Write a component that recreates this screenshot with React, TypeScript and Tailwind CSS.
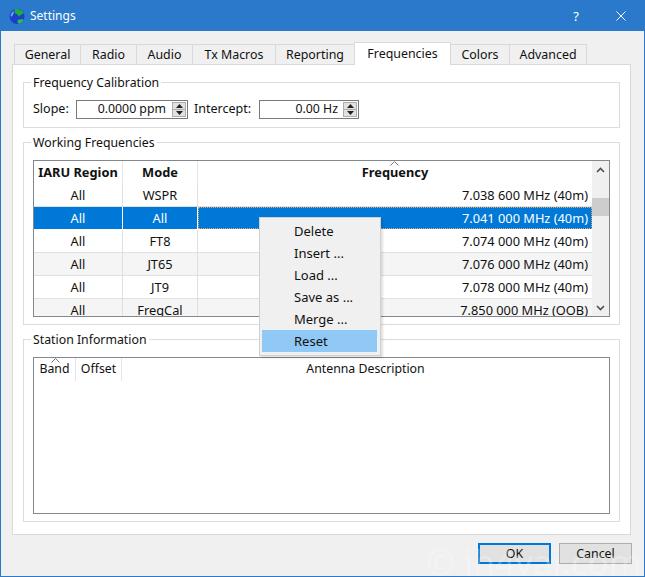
const FONT = "font-['Noto_Sans','Liberation_Sans',sans-serif]";

function Globe() {
  return (
    <svg width="16" height="17" viewBox="0 0 16 17" className="shrink-0">
      <circle cx="8" cy="8.5" r="7.5" fill="#1c3fc8" />
      <path d="M6 1.2 C9 .6 13 2 14.5 5 C13.5 7 11 6.2 10.5 8.5 C9 8 8 5.5 6.5 5.5 C5.5 4 5.2 2.5 6 1.2Z" fill="#1fae3c" />
      <path d="M9 12 C11 11 13 11 14.6 11.5 C13.5 14 11.5 15.5 9.5 15.8 C8.5 14.5 8.2 13 9 12Z" fill="#27c24a" />
      <path d="M1.5 7 C2.5 4.5 4 3.5 5 3 C5.2 5 4 7 2.5 9 Z" fill="#6ba4f0" />
    </svg>
  );
}

const tabs: [string, string][] = [
  ["General", "w-[67px]"],
  ["Radio", "w-[57px]"],
  ["Audio", "w-[57px]"],
  ["Tx Macros", "w-[84px]"],
  ["Reporting", "w-[80px]"],
];

function Tab({ label, w }: { label: string; w: string }) {
  return (
    <div className={`${w} h-[20px] pt-[2px] bg-[#f0f0f0] border border-b-0 border-[#d9d9d9] -mr-px flex items-center justify-center text-[12.4px] leading-none`}>
      {label}
    </div>
  );
}

function Spin({ w, text, gap }: { w: string; text: string; gap: string }) {
  return (
    <div className={`${w} h-[19px] border border-[#7a7a7a] bg-white flex items-center justify-end pr-[1px]`}>
      <span className={`${gap} text-[12.3px] leading-none`}>{text}</span>
      <div className="w-[14px] h-[15px] border border-[#adadad] bg-[#e1e1e1] flex flex-col">
        <div className="flex-1 flex items-center justify-center border-b border-[#adadad]">
          <svg width="7" height="4" viewBox="0 0 7 4"><path d="M3.5 0L7 4H0Z" fill="#222" /></svg>
        </div>
        <div className="flex-1 flex items-center justify-center">
          <svg width="7" height="4" viewBox="0 0 7 4"><path d="M0 0H7L3.5 4Z" fill="#222" /></svg>
        </div>
      </div>
    </div>
  );
}

function Group({ title, h, mb, children }: { title: string; h: string; mb: string; children: React.ReactNode }) {
  return (
    <div className={`relative ${h} ${mb} border border-[#dcdcdc]`}>
      <span className="absolute left-[7px] -top-[9px] h-[18px] bg-white px-[2px] text-[12.3px] leading-[18px]">{title}</span>
      {children}
    </div>
  );
}

const rows = [
  ["All", "WSPR", "7.038 600 MHz (40m)"],
  ["All", "All", "7.041 000 MHz (40m)"],
  ["All", "FT8", "7.074 000 MHz (40m)"],
  ["All", "JT65", "7.076 000 MHz (40m)"],
  ["All", "JT9", "7.078 000 MHz (40m)"],
  ["All", "FreqCal", "7.850 000 MHz (OOB)"],
];

function SortCaret({ className }: { className: string }) {
  return (
    <svg width="9" height="5" viewBox="0 0 9 5" className={`absolute ${className}`}>
      <path d="M.5 4.5L4.5.5L8.5 4.5" fill="none" stroke="#777" strokeWidth="1" />
    </svg>
  );
}

function FreqTable() {
  return (
    <div className="mx-[9px] mt-[17px] h-[157px] border border-[#828790] bg-white flex overflow-hidden">
      <div className="w-[558px] shrink-0">
        <div className="flex h-[23px] font-bold text-[12.8px] leading-none">
          <div className="w-[89px] border-r border-[#e5e5e5] flex items-center justify-center">IARU Region</div>
          <div className="w-[75px] border-r border-[#e5e5e5] flex items-center justify-center">Mode</div>
          <div className="relative flex-1 flex items-center justify-center">
            <SortCaret className="left-[192px] top-0" />
            Frequency
          </div>
        </div>
        {rows.map((r, i) => {
          const sel = i === 1;
          const alt = i % 2 === 1 && !sel;
          return (
            <div
              key={i}
              className={`flex h-[23px] text-[12.8px] leading-none border-b ${sel ? "bg-[#0078d7] text-white border-white" : alt ? "bg-[#f5f5f5] border-[#e0e0e0]" : "bg-white border-[#e0e0e0]"}`}
            >
              <div className={`w-[89px] border-r flex items-center justify-center ${sel ? "border-white" : "border-[#e0e0e0]"}`}>{r[0]}</div>
              <div className={`w-[75px] border-r flex items-center justify-center ${sel ? "border-white" : "border-[#e0e0e0]"}`}>{r[1]}</div>
              <div className={`flex-1 flex items-center justify-end ${sel ? "pr-[3px] border border-dotted border-[#e8a860]" : "pr-[4px]"}`}>{r[2]}</div>
            </div>
          );
        })}
      </div>
      <div className="w-[18px] bg-[#f0f0f0] flex flex-col items-center relative">
        <div className="h-[17px] w-full flex items-center justify-center">
          <svg width="9" height="6" viewBox="0 0 9 6"><path d="M1 5L4.5 1.5L8 5" fill="none" stroke="#505050" strokeWidth="1.6" /></svg>
        </div>
        <div className="mt-[20px] h-[18px] w-[17px] bg-[#cdcdcd]" />
        <div className="mt-auto h-[17px] w-full flex items-center justify-center">
          <svg width="9" height="6" viewBox="0 0 9 6"><path d="M1 1L4.5 4.5L8 1" fill="none" stroke="#505050" strokeWidth="1.6" /></svg>
        </div>
      </div>
    </div>
  );
}

function StationTable() {
  return (
    <div className="mx-[9px] mt-[17px] h-[157px] border border-[#828790] bg-white">
      <div className="flex h-[23px] text-[12.3px] leading-none">
        <div className="relative w-[42px] border-r border-[#e5e5e5] flex items-center justify-center">
          <SortCaret className="left-[17px] top-0" />
          Band
        </div>
        <div className="w-[46px] border-r border-[#e5e5e5] flex items-center justify-center">Offset</div>
        <div className="flex-1 flex items-center justify-center">Antenna Description</div>
      </div>
    </div>
  );
}

function ContextMenu() {
  const items = ["Delete", "Insert ...", "Load ...", "Save as ...", "Merge ...", "Reset"];
  return (
    <div className="absolute left-[246px] top-[152px] w-[122px] h-[139px] z-10 bg-[#f0f0f0] border border-[#d0d0d0] p-[2px] pr-[3px] shadow-[2px_2px_2px_rgba(0,0,0,0.12)]">
      {items.map((t) => (
        <div key={t} className={`h-[22px] pl-[32px] flex items-center text-[13px] leading-none ${t === "Reset" ? "bg-[#90c8f6]" : ""}`}>{t}</div>
      ))}
    </div>
  );
}

export default function App() {
  return (
    <div className={`${FONT} w-[645px] h-[577px] bg-[#f0f0f0] border border-[#2b79cb] text-[#111] flex flex-col overflow-hidden relative`}>
      <div className="h-[30px] shrink-0 bg-[#2b79cb] text-white flex items-center pl-[8px]">
        <Globe />
        <span className="ml-[5px] text-[12px] leading-none">Settings</span>
        <span className="ml-auto mr-[37px] text-[13px] leading-none">?</span>
        <svg width="10" height="10" viewBox="0 0 10 10" className="mr-[18px]">
          <path d="M.5 .5L9.5 9.5M9.5 .5L.5 9.5" stroke="#fff" strokeWidth="1" fill="none" />
        </svg>
      </div>
      <div className="flex-1 px-[11px] pt-[10px] flex flex-col">
        <div className="flex items-end h-[23px] pl-[2px] relative z-[1]">
          {tabs.map(([l, w]) => <Tab key={l} label={l} w={w} />)}
          <div className="w-[97px] h-[23px] bg-white border border-b-0 border-[#d9d9d9] -mr-px -mb-px flex items-center justify-center text-[12.4px] leading-none">Frequencies</div>
          <Tab label="Colors" w="w-[60px]" />
          <Tab label="Advanced" w="w-[78px]" />
        </div>
        <div className="relative w-[619px] h-[471px] bg-white border border-[#d9d9d9] px-[10px] pt-[17px]">
          <Group title="Frequency Calibration" h="h-[46px]" mb="mb-[14px]">
            <div className="flex items-center h-full pt-[9px] pl-[9px] text-[12.5px] leading-none">
              <span className="w-[43px]">Slope:</span>
              <Spin w="w-[112px]" text="0.0000 ppm" gap="mr-[6px]" />
              <span className="ml-[6px] w-[65px]">Intercept:</span>
              <Spin w="w-[100px]" text="0.00 Hz" gap="mr-[5px]" />
            </div>
          </Group>
          <Group title="Working Frequencies" h="h-[183px]" mb="mb-[14px]">
            <FreqTable />
          </Group>
          <Group title="Station Information" h="h-[183px]" mb="">
            <StationTable />
          </Group>
          <ContextMenu />
        </div>
        <div className="flex justify-end gap-[8px] mt-[8px] text-[12.4px] leading-none pr-[1px]">
          <div className="w-[73px] h-[21px] pt-[1px] bg-[#e1e1e1] border-2 border-[#0078d7] flex items-center justify-center">OK</div>
          <div className="w-[73px] h-[21px] pt-[1px] bg-[#e1e1e1] border border-[#adadad] flex items-center justify-center">Cancel</div>
        </div>
      </div>
      <span className="absolute left-[425px] top-[539px] text-[35px] leading-[44px] text-white/25 whitespace-nowrap">© jh4vaj.com</span>
    </div>
  );
}
